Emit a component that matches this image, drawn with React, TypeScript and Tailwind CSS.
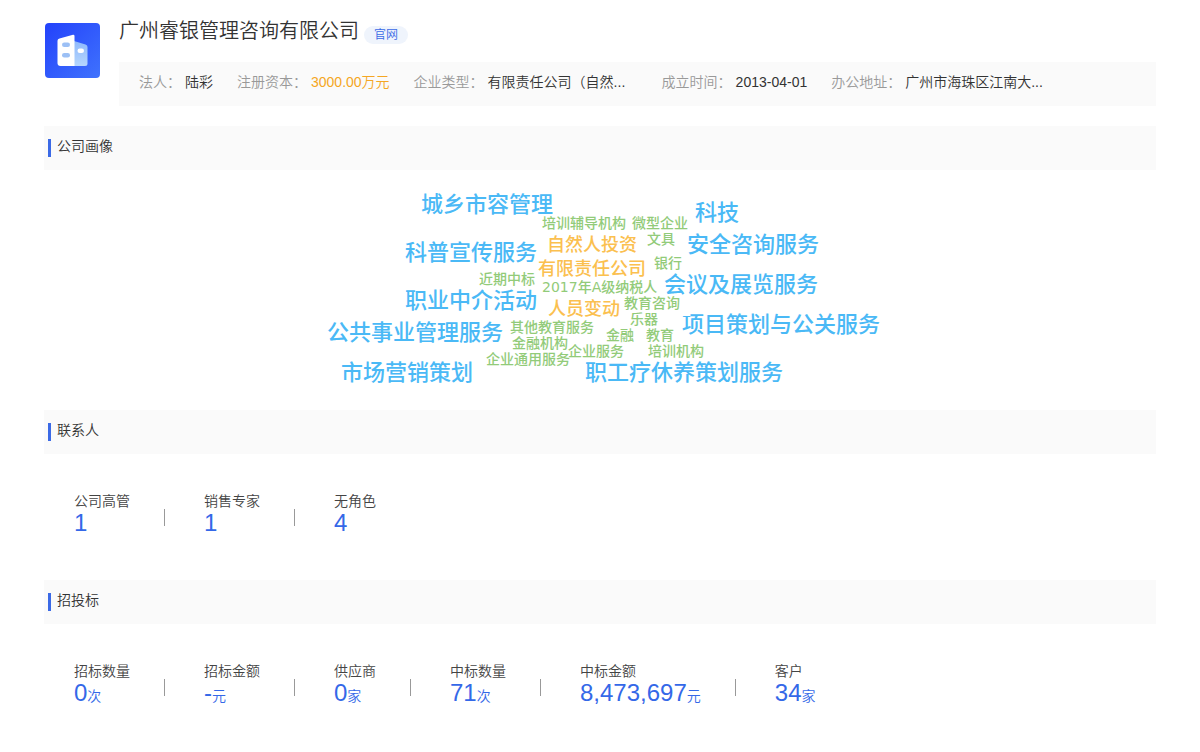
import React from 'react';

type Tone = 'blue' | 'orange' | 'green';

interface CloudWord {
    text: string;
    tone: Tone;
    x: number;
    y: number;
}

interface Stat {
    label: string;
    value: string;
    unit?: string;
}

const facts = [
    { label: '法人：', value: '陆彩', style: 'text-[#333333]' },
    { label: '注册资本：', value: '3000.00万元', style: 'text-[#f5a623]' },
    { label: '企业类型：', value: '有限责任公司（自然...', style: 'text-[#333333] w-[150px]' },
    { label: '成立时间：', value: '2013-04-01', style: 'text-[#333333]' },
    { label: '办公地址：', value: '广州市海珠区江南大...', style: 'text-[#333333] w-[150px]' },
];

const toneStyles: Record<Tone, string> = {
    blue: 'text-[22px] text-[#4ab9f6]',
    orange: 'text-[18px] text-[#fbc04f]',
    green: 'text-[14px] text-[#92cb79]',
};

// x is the left edge of a word, y its vertical centre
const words: CloudWord[] = [
    { text: '城乡市容管理', tone: 'blue', x: 101, y: 35 },
    { text: '科技', tone: 'blue', x: 375, y: 43 },
    { text: '安全咨询服务', tone: 'blue', x: 367, y: 75 },
    { text: '科普宣传服务', tone: 'blue', x: 85, y: 83 },
    { text: '会议及展览服务', tone: 'blue', x: 344, y: 115 },
    { text: '职业中介活动', tone: 'blue', x: 85, y: 131 },
    { text: '项目策划与公关服务', tone: 'blue', x: 362, y: 155 },
    { text: '公共事业管理服务', tone: 'blue', x: 7, y: 163 },
    { text: '市场营销策划', tone: 'blue', x: 21, y: 203 },
    { text: '职工疗休养策划服务', tone: 'blue', x: 265, y: 203 },
    { text: '自然人投资', tone: 'orange', x: 227, y: 75 },
    { text: '有限责任公司', tone: 'orange', x: 218, y: 99 },
    { text: '人员变动', tone: 'orange', x: 228, y: 139 },
    { text: '培训辅导机构', tone: 'green', x: 222, y: 53 },
    { text: '微型企业', tone: 'green', x: 312, y: 53 },
    { text: '文具', tone: 'green', x: 327, y: 69 },
    { text: '银行', tone: 'green', x: 334, y: 93 },
    { text: '近期中标', tone: 'green', x: 159, y: 109 },
    { text: '2017年A级纳税人', tone: 'green', x: 222, y: 117 },
    { text: '教育咨询', tone: 'green', x: 304, y: 133 },
    { text: '乐器', tone: 'green', x: 310, y: 149 },
    { text: '其他教育服务', tone: 'green', x: 190, y: 157 },
    { text: '金融', tone: 'green', x: 286, y: 165 },
    { text: '教育', tone: 'green', x: 326, y: 165 },
    { text: '金融机构', tone: 'green', x: 192, y: 173 },
    { text: '企业服务', tone: 'green', x: 248, y: 181 },
    { text: '培训机构', tone: 'green', x: 328, y: 181 },
    { text: '企业通用服务', tone: 'green', x: 166, y: 189 },
];

const contacts: Stat[] = [
    { label: '公司高管', value: '1' },
    { label: '销售专家', value: '1' },
    { label: '无角色', value: '4' },
];

const bids: Stat[] = [
    { label: '招标数量', value: '0', unit: '次' },
    { label: '招标金额', value: '-', unit: '元' },
    { label: '供应商', value: '0', unit: '家' },
    { label: '中标数量', value: '71', unit: '次' },
    { label: '中标金额', value: '8,473,697', unit: '元' },
    { label: '客户', value: '34', unit: '家' },
];

const CompanyLogo: React.FC = () => (
    <svg viewBox="0 0 55 55" className="w-[55px] h-[55px] mt-[23px] ml-px shrink-0" aria-hidden="true">
        <defs>
            <linearGradient id="logoBg" x1="0" y1="0" x2="1" y2="1">
                <stop offset="0" stopColor="#2342fb" />
                <stop offset="1" stopColor="#3f72fd" />
            </linearGradient>
            <linearGradient id="logoWing" x1="0" y1="0" x2="0" y2="1">
                <stop offset="0" stopColor="#8fb9fb" />
                <stop offset="1" stopColor="#b5d6fe" />
            </linearGradient>
        </defs>
        <rect width="55" height="55" rx="4" fill="url(#logoBg)" />
        <path d="M29 18 L40.500 21.500 Q42.500 22.200 42.500 24 V40.500 Q42.500 43 40 43 H29 Z" fill="url(#logoWing)" />
        <path d="M14.500 15.500 L28 11.700 Q29.500 11.500 29.500 13 V43 H15.500 Q12.500 43 12.500 40 V17.800 Q12.500 16.100 14.500 15.500 Z" fill="#ffffff" />
        <rect x="17" y="19.500" width="8" height="4.500" rx="2.200" fill="#9cc0f5" />
        <rect x="17" y="30" width="8" height="4.500" rx="2.200" fill="#9cc0f5" />
        <rect x="32.500" y="25.500" width="6.500" height="4.500" rx="2.200" fill="#ffffff" />
    </svg>
);

const SectionTitle: React.FC<{ title: string }> = ({ title }) => (
    <div className="h-11 bg-[#fafafa] pl-1 flex items-center">
        <div className="w-[3px] h-[18px] bg-[#3b6ae6]" />
        <h2 className="ml-1.5 pb-1 text-sm font-[350] text-[#333333]">{title}</h2>
    </div>
);

const StatRow: React.FC<{ stats: Stat[] }> = ({ stats }) => (
    <dl className="h-[126px] pl-[30px] pt-[37px] flex items-start">
        {stats.map((stat, index) => (
            <React.Fragment key={stat.label}>
                {index > 0 && <div className="w-px h-[17px] mt-[18px] ml-[34px] mr-[39px] bg-[#999999]" />}
                <div>
                    <dt className="text-sm leading-5 text-[#444444]">{stat.label}</dt>
                    <dd className="text-2xl leading-6 text-[#3468e8]">
                        {stat.value}
                        {stat.unit && <span className="text-sm leading-none">{stat.unit}</span>}
                    </dd>
                </div>
            </React.Fragment>
        ))}
    </dl>
);

const WordCloud: React.FC = () => (
    <div className="h-60">
        <div className="relative w-[560px] h-full mx-auto font-medium font-['DejaVu_Sans','Noto_Sans_CJK_SC',sans-serif]">
            {words.map((word) => (
                <span
                    key={word.text}
                    className={`absolute -translate-y-1/2 leading-none whitespace-nowrap ${toneStyles[word.tone]}`}
                    style={{ left: word.x, top: word.y }}
                >
                    {word.text}
                </span>
            ))}
        </div>
    </div>
);

const App: React.FC = () => {
    return (
        <main className="px-11 bg-white font-[350] font-['Liberation_Sans','Noto_Sans_CJK_SC',sans-serif]">
            {/* Company header */}
            <header className="flex items-start mb-5">
                <CompanyLogo />
                <div className="flex-1 min-w-0 ml-[19px] pt-4">
                    <div className="flex items-start">
                        <h1 className="text-xl leading-[30px] font-[350] text-[#333333]">广州睿银管理咨询有限公司</h1>
                        <a href="#" className="mt-2.5 ml-[5px] px-2.5 rounded-full bg-[#eff4fc] text-xs leading-[18px] text-[#3b6ae6]">
                            官网
                        </a>
                    </div>
                    <dl className="mt-4 h-11 px-5 pb-1 bg-[#fafafa] flex items-center gap-6 text-sm whitespace-nowrap">
                        {facts.map((fact) => (
                            <div key={fact.label} className="flex gap-1">
                                <dt className="text-[#999999]">{fact.label}</dt>
                                <dd className={fact.style}>{fact.value}</dd>
                            </div>
                        ))}
                    </dl>
                </div>
            </header>

            <section>
                <SectionTitle title="公司画像" />
                <WordCloud />
            </section>

            <section>
                <SectionTitle title="联系人" />
                <StatRow stats={contacts} />
            </section>

            <section>
                <SectionTitle title="招投标" />
                <StatRow stats={bids} />
            </section>
        </main>
    );
};

export default App;
